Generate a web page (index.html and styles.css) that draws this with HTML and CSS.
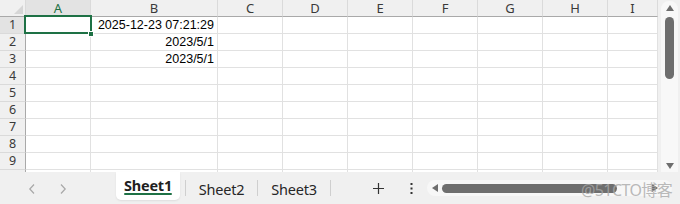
FILE: index.html
```html
<!DOCTYPE html>
<html>
<head>
<meta charset="utf-8">
<link rel="stylesheet" href="styles.css">
</head>
<body>
<div class="app">
  <div class="main">
    <div class="sheet">
      <div class="row head">
        <div class="cell corner"><span class="tri"></span></div>
        <div class="cell colh sel">A</div>
        <div class="cell colh">B</div>
        <div class="cell colh">C</div>
        <div class="cell colh">D</div>
        <div class="cell colh">E</div>
        <div class="cell colh">F</div>
        <div class="cell colh">G</div>
        <div class="cell colh">H</div>
        <div class="cell colh">I</div>
      </div>
      <div class="row">
        <div class="cell rowh sel">1</div><div class="cell"></div><div class="cell num">2025-12-23 07:21:29</div><div class="cell"></div><div class="cell"></div><div class="cell"></div><div class="cell"></div><div class="cell"></div><div class="cell"></div><div class="cell"></div>
      </div>
      <div class="row">
        <div class="cell rowh">2</div><div class="cell"></div><div class="cell num">2023/5/1</div><div class="cell"></div><div class="cell"></div><div class="cell"></div><div class="cell"></div><div class="cell"></div><div class="cell"></div><div class="cell"></div>
      </div>
      <div class="row">
        <div class="cell rowh">3</div><div class="cell"></div><div class="cell num">2023/5/1</div><div class="cell"></div><div class="cell"></div><div class="cell"></div><div class="cell"></div><div class="cell"></div><div class="cell"></div><div class="cell"></div>
      </div>
      <div class="row">
        <div class="cell rowh">4</div><div class="cell"></div><div class="cell"></div><div class="cell"></div><div class="cell"></div><div class="cell"></div><div class="cell"></div><div class="cell"></div><div class="cell"></div><div class="cell"></div>
      </div>
      <div class="row">
        <div class="cell rowh">5</div><div class="cell"></div><div class="cell"></div><div class="cell"></div><div class="cell"></div><div class="cell"></div><div class="cell"></div><div class="cell"></div><div class="cell"></div><div class="cell"></div>
      </div>
      <div class="row">
        <div class="cell rowh">6</div><div class="cell"></div><div class="cell"></div><div class="cell"></div><div class="cell"></div><div class="cell"></div><div class="cell"></div><div class="cell"></div><div class="cell"></div><div class="cell"></div>
      </div>
      <div class="row">
        <div class="cell rowh">7</div><div class="cell"></div><div class="cell"></div><div class="cell"></div><div class="cell"></div><div class="cell"></div><div class="cell"></div><div class="cell"></div><div class="cell"></div><div class="cell"></div>
      </div>
      <div class="row">
        <div class="cell rowh">8</div><div class="cell"></div><div class="cell"></div><div class="cell"></div><div class="cell"></div><div class="cell"></div><div class="cell"></div><div class="cell"></div><div class="cell"></div><div class="cell"></div>
      </div>
      <div class="row">
        <div class="cell rowh">9</div><div class="cell"></div><div class="cell"></div><div class="cell"></div><div class="cell"></div><div class="cell"></div><div class="cell"></div><div class="cell"></div><div class="cell"></div><div class="cell"></div>
      </div>
      <div class="row">
        <div class="cell rowh"></div><div class="cell"></div><div class="cell"></div><div class="cell"></div><div class="cell"></div><div class="cell"></div><div class="cell"></div><div class="cell"></div><div class="cell"></div><div class="cell"></div>
      </div>
      <div class="selection"></div>
      <div class="handle"></div>
    </div>
    <div class="vscroll">
      <div class="vtrack">
        <svg class="arrow" width="8" height="6" viewBox="0 0 8 6"><path d="M4 0 L8 6 L0 6 Z" fill="#6e6e6e"/></svg>
        <div class="vthumb"></div>
        <div class="spacer"></div>
        <svg class="arrow" width="8" height="6" viewBox="0 0 8 6"><path d="M0 0 L8 0 L4 6 Z" fill="#6e6e6e"/></svg>
      </div>
    </div>
  </div>
  <div class="bar">
    <div class="nav">
      <svg width="8" height="10" viewBox="0 0 8 10"><path d="M6 0.5 L1.8 5 L6 9.5" fill="none" stroke="#a8a8a8" stroke-width="1.2"/></svg>
      <svg width="8" height="10" viewBox="0 0 8 10"><path d="M2 0.5 L6.2 5 L2 9.5" fill="none" stroke="#a8a8a8" stroke-width="1.2"/></svg>
    </div>
    <div class="tabslot first">
      <div class="tab active"><span class="tabtext">Sheet1</span><span class="underline"></span></div>
    </div>
    <div class="sep"></div>
    <div class="tab t2"><span class="tabtext">Sheet2</span></div>
    <div class="sep"></div>
    <div class="tab t3"><span class="tabtext">Sheet3</span></div>
    <div class="sep"></div>
    <div class="tools">
      <svg class="plus" width="11" height="11" viewBox="0 0 11 11"><path d="M5.5 0 V11 M0 5.5 H11" stroke="#333" stroke-width="1.2"/></svg>
      <svg class="more" width="3" height="11" viewBox="0 0 3 11"><rect x="0.5" y="0" width="2" height="2" fill="#333"/><rect x="0.5" y="4.5" width="2" height="2" fill="#333"/><rect x="0.5" y="9" width="2" height="2" fill="#333"/></svg>
    </div>
    <div class="htrack">
      <svg width="6" height="8" viewBox="0 0 6 8"><path d="M0 4 L6 0 L6 8 Z" fill="#6e6e6e"/></svg>
      <div class="hthumb"></div>
      <svg width="6" height="8" viewBox="0 0 6 8"><path d="M6 4 L0 0 L0 8 Z" fill="#6e6e6e"/></svg>
    </div>
    <div class="watermark">@51CTO博客</div>
  </div>
</div>
</body>
</html>
```
FILE: styles.css
```css
* { box-sizing: border-box; }
html, body { margin: 0; padding: 0; }
body {
  width: 680px;
  height: 204px;
  overflow: hidden;
  background: #f0f0f0;
  font-family: "Noto Sans", "Open Sans", sans-serif;
}
.app {
  display: flex;
  flex-direction: column;
  width: 680px;
  height: 204px;
}
.main {
  display: flex;
  height: 172px;
}
.sheet {
  position: relative;
  width: 658px;
  height: 172px;
  overflow: hidden;
  background: #fff;
}
.row {
  display: grid;
  grid-template-columns: 26px 65px 127px 65px 65px 65px 65px 65px 65px 50px;
  height: 17px;
}
.cell {
  border-right: 1px solid #e1e1e1;
  border-bottom: 1px solid #e1e1e1;
  height: 17px;
}
.head .cell {
  background: #f0f0f0;
  border-right: 1px solid #dadada;
  border-bottom: 1px solid #a9a9a9;
}
.colh {
  font-size: 13px;
  color: #3a3a3a;
  text-align: center;
  line-height: 16px;
}
.colh.sel {
  color: #1e7145;
  background: #e3e3e3 !important;
  border-bottom: 1px solid #1e7145 !important;
}
.corner {
  position: relative;
}
.tri {
  position: absolute;
  right: 2px;
  bottom: 2px;
  width: 0;
  height: 0;
  border-left: 9px solid transparent;
  border-bottom: 9px solid #d6d6d6;
}
.rowh {
  background: #f0f0f0;
  border-right: 1px solid #a9a9a9;
  border-bottom: 1px solid #dadada;
  font-size: 12.5px;
  color: #3a3a3a;
  text-align: center;
  line-height: 16px;
}
.rowh.sel {
  background: #e3e3e3;
}
.num {
  font-family: "Liberation Sans", Arial, sans-serif;
  font-size: 12.5px;
  color: #000;
  text-align: right;
  padding-right: 3px;
  line-height: 16px;
  white-space: nowrap;
}
.selection {
  position: absolute;
  left: 24px;
  top: 15px;
  width: 68px;
  height: 19px;
  border: 2px solid #1e7145;
}
.handle {
  position: absolute;
  left: 88px;
  top: 31px;
  width: 6px;
  height: 6px;
  background: #1e7145;
  border: 1px solid #fff;
}
.vscroll {
  width: 22px;
  height: 172px;
  padding: 1px 2px 0 3px;
  background: #f0f0f0;
}
.vtrack {
  height: 100%;
  background: #f8f8f8;
  border-radius: 8px 8px 0 0;
  display: flex;
  flex-direction: column;
  align-items: center;
  padding: 4px 0 3px;
}
.vthumb {
  margin-top: 6px;
  width: 9px;
  height: 62px;
  border-radius: 5px;
  background: #6e6e6e;
}
.spacer { flex: 1; }
.arrow { display: block; }
.bar {
  position: relative;
  display: flex;
  align-items: center;
  height: 32px;
  background: #f0f0f0;
}
.nav {
  width: 116px;
  display: flex;
  align-items: center;
  padding-left: 28px;
  gap: 23px;
  padding-top: 2px;
}
.nav svg { display: block; }
.tabslot.first {
  width: 69px;
  align-self: flex-start;
}
.tab {
  display: flex;
  align-items: center;
  justify-content: center;
  font-size: 14.5px;
  letter-spacing: -0.2px;
  color: #262626;
  height: 28px;
}
.tab.active {
  position: relative;
  width: 64px;
  background: #fff;
  border-radius: 0 0 5px 5px;
  font-weight: bold;
  color: #1f1f1f;
  box-shadow: 0 1px 2px rgba(0,0,0,0.08);
  padding-bottom: 2px;
}
.underline {
  position: absolute;
  left: 8px;
  right: 8px;
  bottom: 5px;
  height: 2px;
  border-radius: 1px;
  background: #1e7145;
}
.tab.t2 { width: 71px; padding-top: 2px; }
.tab.t3 { width: 72px; padding-top: 2px; }
.sep {
  width: 1px;
  height: 16px;
  background: #cfcfcf;
  margin-top: 0;
}
.tools {
  display: flex;
  align-items: center;
  padding-left: 42px;
  gap: 26px;
  width: 96px;
}
.tools svg { display: block; }
.htrack {
  width: 245px;
  height: 16px;
  margin-top: 0;
  background: #f7f7f7;
  border-radius: 8px;
  display: flex;
  align-items: center;
  padding: 0 14px 0 5px;
  gap: 4px;
}
.htrack svg { display: block; }
.hthumb {
  width: 175px;
  height: 9px;
  border-radius: 5px;
  background: #6e6e6e;
  margin-right: auto;
}
.watermark {
  position: absolute;
  left: 581px;
  top: 5px;
  font-size: 16px;
  letter-spacing: -0.6px;
  color: rgba(168,168,168,0.8);
  font-family: "Noto Sans", "Noto Sans CJK SC", sans-serif;
  white-space: nowrap;
}
```
